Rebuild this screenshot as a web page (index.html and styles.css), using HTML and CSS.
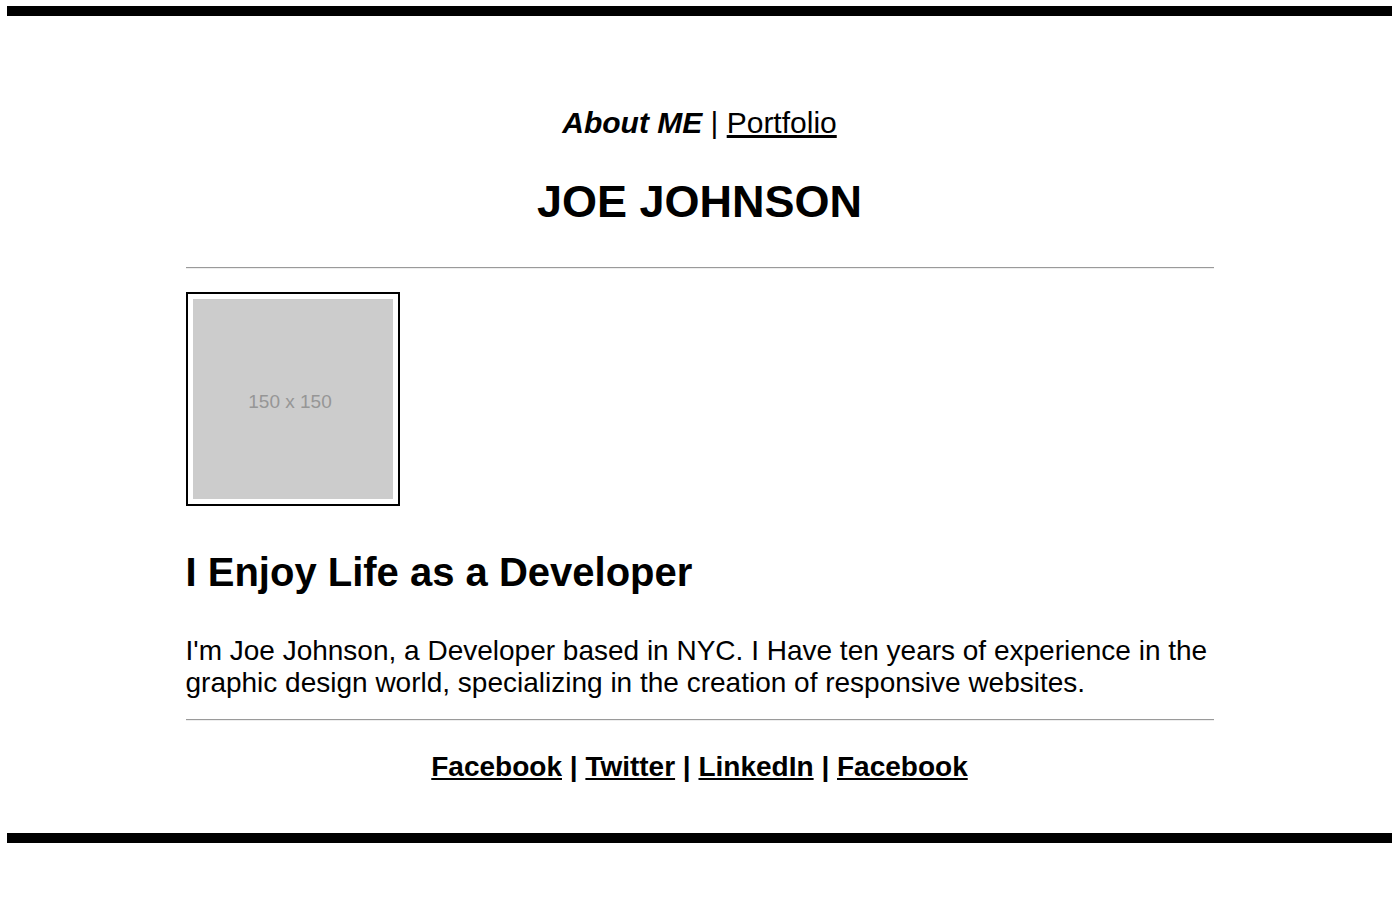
FILE: index.html
```html
<!DOCTYPE html>
<html lang="en">
<head>
<meta charset="utf-8">
<title>Joe Johnson - About Me</title>
<link rel="stylesheet" href="styles.css">
</head>
<body>
<div class="page">
  <div class="content">
    <nav class="nav"><strong><em>About ME</em></strong> | <a href="#">Portfolio</a></nav>
    <h1 class="name">JOE JOHNSON</h1>
    <hr class="rule rule-top">
    <div class="photo"><div class="placeholder">150 x 150</div></div>
    <h2 class="headline">I Enjoy Life as a Developer</h2>
    <p class="bio">I'm Joe Johnson, a Developer based in NYC. I Have ten years of experience in the graphic design world, specializing in the creation of responsive websites.</p>
    <hr class="rule rule-bottom">
    <footer class="social"><a href="#">Facebook</a> | <a href="#">Twitter</a> | <a href="#">LinkedIn</a> | <a href="#">Facebook</a></footer>
  </div>
</div>
</body>
</html>
```

FILE: styles.css
```css
html, body {
  margin: 0;
  padding: 0;
  background: #fff;
}

.page {
  margin: 6px 3px 0 7px;
  border-top: 10px solid #000;
  border-bottom: 10px solid #000;
  font-family: "Liberation Sans", Arial, sans-serif;
  color: #000;
}

.content {
  width: 1028px;
  margin: 0 auto;
  padding: 90px 0 50px;
}

.nav {
  display: block;
  text-align: center;
  font-size: 30px;
  line-height: 34px;
}

.nav a {
  color: #000;
  text-decoration: underline;
}

.name {
  margin: 36px 0 0;
  text-align: center;
  font-size: 45px;
  line-height: 52px;
  font-weight: bold;
}

.rule {
  height: 0;
  margin: 0;
  border: 0;
  border-top: 1px solid #9a9a9a;
  border-bottom: 1px solid #eeeeee;
}

.rule-top {
  margin-top: 39px;
}

.photo {
  margin-top: 23px;
  width: 200px;
  height: 200px;
  padding: 5px;
  border: 2px solid #000;
  background: #fff;
}

.placeholder {
  width: 200px;
  height: 200px;
  background: #cccccc;
  color: #969696;
  font-size: 19px;
  display: flex;
  align-items: center;
  justify-content: center;
  padding: 5px 5px 0 0;
  box-sizing: border-box;
}

.headline {
  margin: 43px 0 0;
  font-size: 40px;
  line-height: 46px;
  font-weight: bold;
}

.bio {
  margin: 40px 0 0;
  font-size: 28px;
  line-height: 32px;
}

.rule-bottom {
  margin-top: 20px;
}

.social {
  margin-top: 30px;
  text-align: center;
  font-size: 28px;
  line-height: 32px;
  font-weight: bold;
}

.social a {
  color: #000;
  text-decoration: underline;
}
```
